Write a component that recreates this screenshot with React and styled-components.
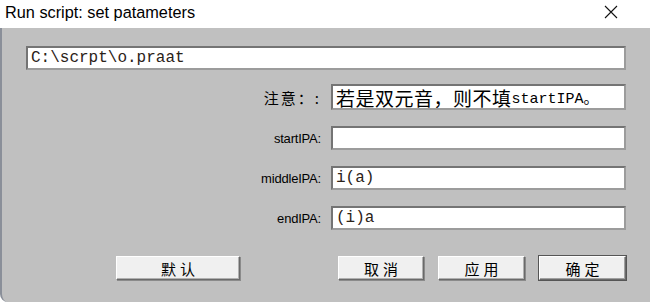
import React from 'react';
import styled, { createGlobalStyle } from 'styled-components';

const GlobalStyle = createGlobalStyle`
  html, body {
    margin: 0;
    padding: 0;
    background: #ffffff;
  }
`;

const CJK = `"Noto Sans CJK SC", "Noto Sans", sans-serif`;
const MONO = `"Liberation Mono", "Noto Sans CJK SC", monospace`;

const Window = styled.div`
  width: 650px;
  height: 304px;
  display: flex;
  flex-direction: column;
  overflow: hidden;
`;

const TitleBar = styled.div`
  height: 28px;
  flex-shrink: 0;
  display: flex;
  align-items: center;
  justify-content: space-between;
  background: #ffffff;
  padding: 0 32px 0 5px;
  box-sizing: border-box;
`;

const Title = styled.span`
  font-family: 'Liberation Sans', Arial, sans-serif;
  font-size: 16.3px;
  color: #000;
  margin-top: -4px;
`;

const CloseIcon = styled.svg`
  width: 14px;
  height: 14px;
  margin-top: -4px;
`;

const Body = styled.div`
  flex: 1;
  display: flex;
  flex-direction: column;
  background: #c0c0c0;
  padding: 18px 24px 0 24px;
  border-left: 2px solid #8a8f99;
  border-bottom-left-radius: 8px;
  margin-bottom: 2px;
`;

const Field = styled.div`
  height: ${(p) => p.$height || 24}px;
  flex: 1;
  box-sizing: border-box;
  display: flex;
  align-items: center;
  background: #ffffff;
  border: 2px solid;
  border-color: #747474 #9c9c9c #9c9c9c #747474;
  padding-left: 3px;
  font-family: ${MONO};
  font-size: 16px;
  color: #2b2218;
  white-space: nowrap;
  overflow: hidden;
`;

const PathRow = styled.div`
  display: flex;
`;

const Row = styled.div`
  display: flex;
  align-items: center;
  margin-top: ${(p) => p.$gap}px;
`;

const Label = styled.div`
  width: 295px;
  margin-right: 10px;
  flex-shrink: 0;
  text-align: right;
  font-family: 'Liberation Sans', Arial, sans-serif;
  font-size: 13px;
  letter-spacing: -0.2px;
  color: #000;
`;

const NoteLabel = styled(Label)`
  font-family: ${CJK};
  font-size: 15px;
  letter-spacing: 2px;
`;

const NoteText = styled.span`
  font-family: ${CJK};
  font-size: 19px;
  color: #000;
  letter-spacing: 0.5px;
`;

const NoteMono = styled.span`
  font-family: ${MONO};
  font-size: 15px;
  color: #000;
`;

const ButtonBar = styled.div`
  display: flex;
  margin-top: 26px;
`;

const Group = styled.div`
  display: flex;
  gap: 14px;
  margin-left: auto;
`;

const Button = styled.button`
  width: ${(p) => p.$width}px;
  height: 24px;
  margin-left: ${(p) => p.$left || 0}px;
  box-sizing: border-box;
  background: #f0f0f0;
  border: 1px solid;
  border-color: #ffffff #6a6a6a #6a6a6a #ffffff;
  box-shadow: ${(p) =>
    p.$primary ? '0 0 0 1px #555, inset -1px -1px 0 #a0a0a0' : '1px 1px 0 #8a8a8a, inset -1px -1px 0 #b0b0b0'};
  font-family: ${CJK};
  font-size: 15px;
  letter-spacing: 4px;
  padding: 0 0 0 4px;
  color: #000;
  cursor: pointer;
`;

export default function App() {
  return (
    <Window>
      <GlobalStyle />
      <TitleBar>
        <Title>Run script: set patameters</Title>
        <CloseIcon viewBox="0 0 14 14">
          <path d="M1 1 L13 13 M13 1 L1 13" stroke="#111" strokeWidth="1.1" fill="none" />
        </CloseIcon>
      </TitleBar>
      <Body>
        <PathRow>
          <Field>C:\scrpt\o.praat</Field>
        </PathRow>
        <Row $gap={14}>
          <NoteLabel>注意：:</NoteLabel>
          <Field $height={26}>
            <NoteText>若是双元音，则不填</NoteText>
            <NoteMono>startIPA。</NoteMono>
          </Field>
        </Row>
        <Row $gap={16}>
          <Label>startIPA:</Label>
          <Field />
        </Row>
        <Row $gap={16}>
          <Label>middleIPA:</Label>
          <Field>i(a)</Field>
        </Row>
        <Row $gap={16}>
          <Label>endIPA:</Label>
          <Field>(i)a</Field>
        </Row>
        <ButtonBar>
          <Button $width={124} $left={90}>默认</Button>
          <Group>
            <Button $width={86}>取消</Button>
            <Button $width={87}>应用</Button>
            <Button $width={87} $primary>确定</Button>
          </Group>
        </ButtonBar>
      </Body>
    </Window>
  );
}
